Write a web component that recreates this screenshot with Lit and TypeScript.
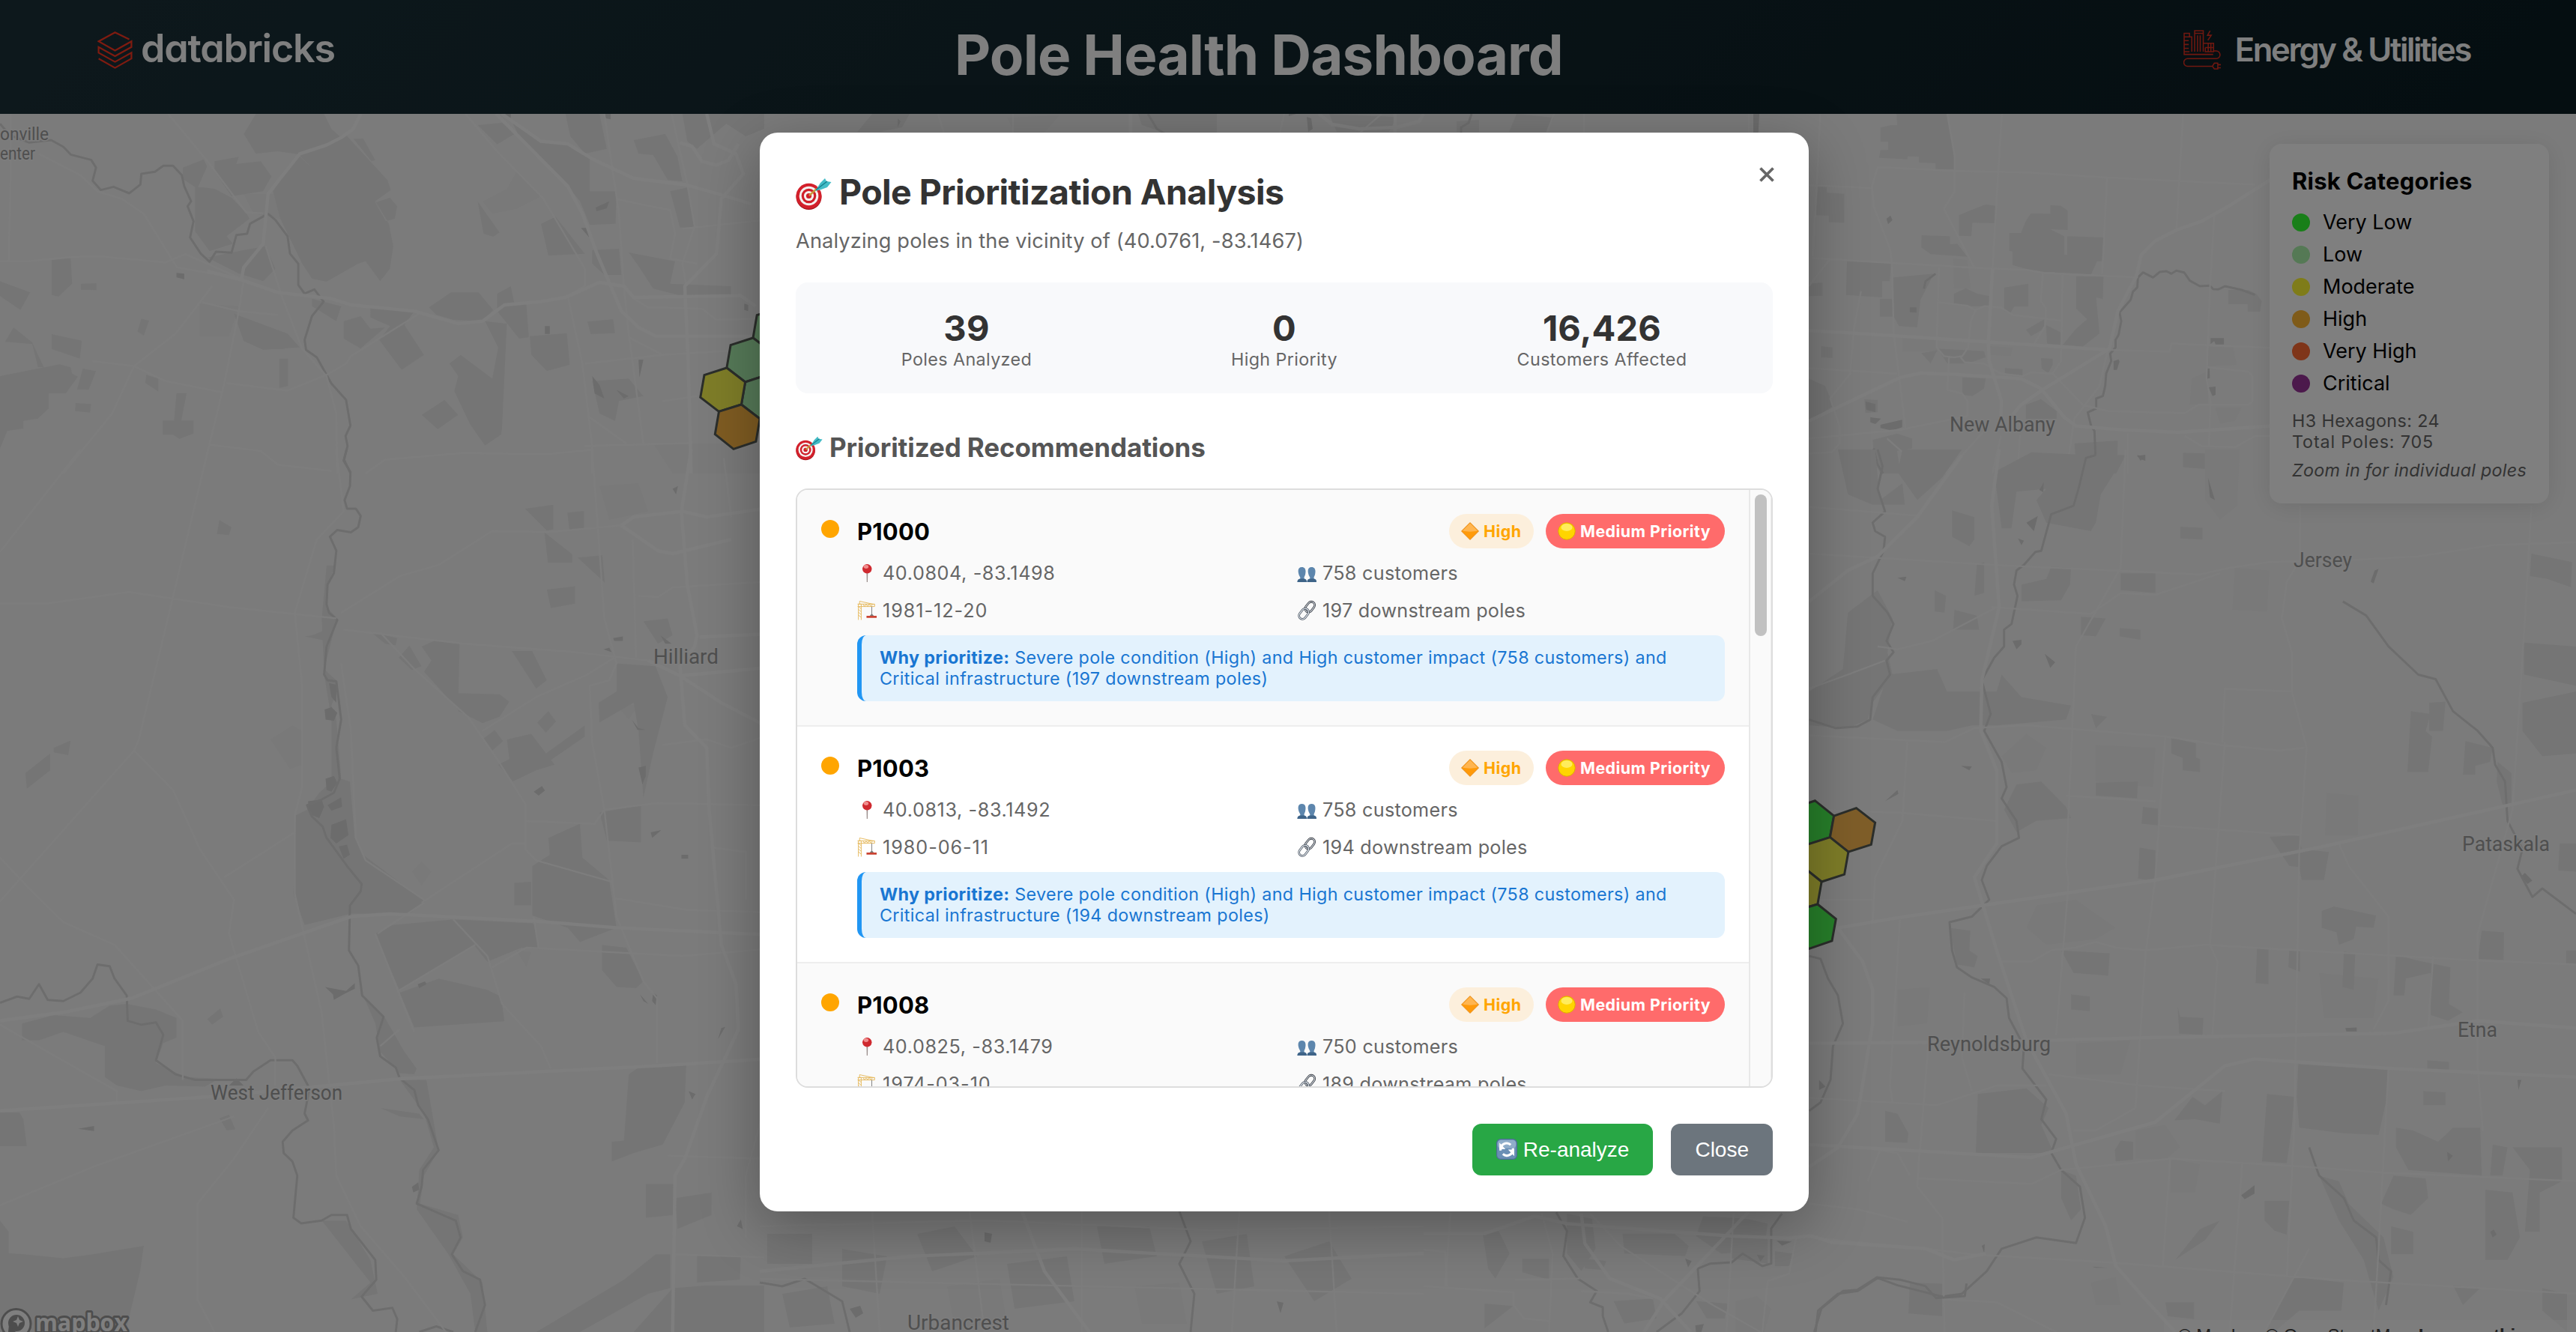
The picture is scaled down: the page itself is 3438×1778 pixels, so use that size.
import { LitElement, html, svg, css, nothing } from "lit";
import { customElement, property } from "lit/decorators.js";

interface Pole {
  id: string;
  coords: string;
  date: string;
  customers: number;
  downstream: number;
}

const POLES: Pole[] = [
  { id: "P1000", coords: "40.0804, -83.1498", date: "1981-12-20", customers: 758, downstream: 197 },
  { id: "P1003", coords: "40.0813, -83.1492", date: "1980-06-11", customers: 758, downstream: 194 },
  { id: "P1008", coords: "40.0825, -83.1479", date: "1974-03-10", customers: 750, downstream: 189 },
];

const STATS = [
  { value: "39", label: "Poles Analyzed" },
  { value: "0", label: "High Priority" },
  { value: "16,426", label: "Customers Affected" },
];

const RISKS = [
  { name: "Very Low", color: "#33ff33" },
  { name: "Low", color: "#abf2ab" },
  { name: "Moderate", color: "#fff933" },
  { name: "High", color: "#ffb733" },
  { name: "Very High", color: "#ff6a33" },
  { name: "Critical", color: "#993399" },
];

/* ---------- icons ---------- */

const ICONS = {
  target: svg`
    <circle cx="17.500" cy="30" r="17" fill="#a3141c"/><circle cx="17.500" cy="28.800" r="17" fill="#d3202b"/>
    <circle cx="17.500" cy="28.500" r="12.800" fill="#f4f1f0"/><circle cx="17.500" cy="28.500" r="9.800" fill="#cf1f2a"/>
    <circle cx="17.500" cy="28.500" r="6.600" fill="#f6f1f0"/><circle cx="17.500" cy="28.500" r="3.600" fill="#cf1f2a"/>
    <path d="M18 28L28 19" stroke="#c79a3b" stroke-width="2.400"/>
    <path d="M26 22L33 11 39 5 41 9 47.500 10 42 17 34 20z" fill="#43bcc6"/><path d="M27 20.500L42 9" stroke="#167e8d" stroke-width="1.500"/>`,
  pin: svg`
    <path d="M23 20h3.4l-.6 26h-2.2z" fill="#9b8f8d"/><circle cx="24.5" cy="13.5" r="11.5" fill="#cf2a30"/>
    <ellipse cx="22" cy="8.5" rx="6" ry="4.6" fill="#f08d8d"/>`,
  crane: svg`
    <path d="M3 47V8h7v39M3 14l7 6M3 21l7 6M3 28l7 6M3 35l7 6M1 8h42v6H1M14 8l4 6 4-6 4 6 4-6 4 6 4-6M6 1L43 9M6 1v7" fill="none" stroke="#e6bb62" stroke-width="1.800"/>
    <path d="M36 14v22" stroke="#8b8b8b" stroke-width="2"/><path d="M31 37l5-5 5 5z" fill="#777"/><path d="M23 37h25v5H23z" fill="#c9402f"/>`,
  people: svg`
    <path d="M1 46c0-5 3-7 7-8 1-3-1-5-3-9C1 17 3 9 12 9s11 8 8 20c-2 4-3 6-2 9 4 1 6 3 6 8z" fill="#5d86ad"/>
    <path d="M25 46c0-5 3-7 7-8 1-3-1-5-3-9-4-12-2-20 7-20s11 8 8 20c-2 4-3 6-2 9 4 1 6 3 6 8z" fill="#5d86ad"/>
    <path d="M1 46c0-5 3-7 7-8h9c4 1 7 3 7 8zM25 46c0-5 3-7 7-8h9c4 1 7 3 7 8z" fill="#3f6488"/>`,
  link: svg`
    <rect x="23" y="1" width="17" height="28" rx="8.500" transform="rotate(38 31.5 15.5)" fill="none" stroke="#3f4349" stroke-width="5.2"/>
    <rect x="23" y="1" width="17" height="28" rx="8.500" transform="rotate(38 31.5 15.5)" fill="none" stroke="#cfd6de" stroke-width="2"/>
    <rect x="8" y="18" width="17" height="28" rx="8.500" transform="rotate(38 16.5 32.5)" fill="none" stroke="#525b67" stroke-width="5.2"/>
    <rect x="8" y="18" width="17" height="28" rx="8.500" transform="rotate(38 16.5 32.5)" fill="none" stroke="#e3e9ef" stroke-width="2.2"/>`,
  diamond: svg`
    <path d="M24 1L47 24 24 47 1 24z" fill="#ff9a0a"/><path d="M24 3L44 23c-12 3-28 3-40 0z" fill="#ffb550"/>
    <path d="M24 1L47 24 24 47 1 24z" fill="none" stroke="#dd7f0c" stroke-width="1.6"/>`,
  circle: svg`
    <circle cx="24" cy="24" r="22.5" fill="#ffd500" stroke="#e0ab00" stroke-width="2"/>
    <ellipse cx="24" cy="14" rx="15" ry="10" fill="#ffec5c"/>`,
  refresh: svg`
    <rect x="1" y="1" width="46" height="46" rx="9" fill="#6a8fb5" stroke="#4c6d92" stroke-width="2"/>
    <rect x="3" y="3" width="42" height="19" rx="8" fill="#8fadc9"/>
    <path d="M10 27a14 14 0 0 1 23-13M38 22a14 14 0 0 1-23 13" fill="none" stroke="#fff" stroke-width="5.4"/>
    <path d="M7 9v15h14zM41 40V25H27z" fill="#fff"/>`,
};

type IconName = keyof typeof ICONS;

@customElement("emoji-icon")
class EmojiIcon extends LitElement {
  @property() name: IconName = "target";
  static styles = css`
    :host { display: inline-flex; flex: none; width: 26px; height: 26px; }
    .glyph { width: 100%; height: 100%; display: block; overflow: visible; }
  `;
  render() {
    return html`<svg class="glyph" viewBox="0 0 48 48">${ICONS[this.name]}</svg>`;
  }
}

/* ---------- map ---------- */

interface Sheet {
  transform: string;
  parks: string;
  pale: string;
  water: string;
  rivers: string;
  thin: string;
  wide: string;
}

const SHEETS: Sheet[] = [
  {
    transform: "translate(0 152) scale(.6505 .33333)",
    parks:
      "M525 0L500 80 525 160 570 150 612 162 640 215 665 130 700 95 680 60 665 0zM612 165L560 310 575 420 600 520 620 600 640 660 670 672 735 600 750 590 780 670 800 620 807 530 798 440 770 350 802 305 795 265 710 85 665 130 640 215zM375 215L418 182 425 210 405 300 375 260zM440 190L490 172 485 200 535 190 557 250 540 310 475 330 440 230zM400 290L440 300 475 335 505 395 512 420 465 490 478 520 430 550 400 470zM725 100L745 98 770 185 762 190zM980 45L1030 35 1058 78 1020 122zM1050 30L1110 110 1160 120 1210 175 1210 310 1265 310 1263 440 1210 445 1190 350 1165 290 1070 110zM1160 0H1230L1245 140 1200 160 1170 90zM1110 440L1140 412 1200 560 1125 568zM1215 545L1270 540 1275 645 1240 645 1215 600zM1300 105L1365 80 1390 170 1400 270 1370 265 1340 165 1310 160zM1375 310L1410 295 1425 455 1395 455zM1400 0H1568V60L1530 90 1490 40 1430 140 1410 110zM980 350L1025 475 1012 492 992 480zM770 355L800 335 815 370 810 420 792 430zM0 670L62 715 42 785 0 730zM106 585L145 575 148 680 120 732 106 725zM166 680L198 678V706L166 704zM28 855L66 915 90 1015 78 1015 66 922 10 913zM106 882L168 908 164 980 106 942zM0 1050L122 1003 145 1015 148 1040 160 1052 135 1120H100L100 1180 78 1220 48 1230V1260L15 1270 0 1340zM170 1020L197 1030 182 1105 158 1103zM155 1158L187 1162 185 1196 154 1190zM362 1118H383L372 1228H397V1280L368 1302 355 1285H334V1228H357zM300 1045L325 1060V1112L298 1078zM290 820L306 828 295 888 282 872zM573 980H591V1090L573 1098zM705 830L740 810 760 860 790 855 740 940 705 900zM760 778L850 790 830 845 870 965 824 1025 778 905 800 850 760 815zM880 775L925 715H982L1012 785 990 830 930 825 895 805zM1020 720L1048 690 1055 755 1080 762 1085 895 1065 900 1020 790zM995 830L1040 840 1030 1260 1028 1285 995 1328 965 1245 932 1110 940 1050 922 1000 945 965 1010 1060 1022 935zM1087 890L1163 878 1169 1005 1122 1030 1090 965zM1205 832L1258 822 1262 878 1212 882zM865 1205L912 1145 940 1205 898 1263zM1215 1070L1290 1060 1320 1130 1270 1150 1262 1230 1230 1200zM480 800L590 880 615 935 540 945 500 910zM535 885L585 890V942L535 940zM425 575L500 545 545 530 565 620 540 670 490 640zM640 740L700 770 690 830 640 770zM1290 555L1385 590 1375 680 1500 690V730H1400L1340 700 1310 610z",
    pale: "M410 760L490 770 470 890 410 890zM1060 230L1110 330 1060 380 1010 400 990 350 1040 300zM500 320L575 320V420L520 400zM1340 1320H1568V1440H1380z",
    water: "M362 637L378 640V662L362 655zM1222 375L1250 350 1245 378 1224 390zM1192 457H1203L1209 495zM1118 850H1128V881H1118zM1527 760L1535 765V790L1527 785zM1310 985H1320L1312 1055zM1215 1050L1230 1085 1240 1140 1220 1120zM1264 1104L1290 1130 1280 1140zM1036 0H1048V20L1038 10zM1240 0H1253V22L1243 18z",
    rivers:
      "M0 40L20 85 60 115 105 105 130 132 145 163 187 184 197 215 190 268 207 305 233 292 265 318 288 283 290 240 318 232 335 208 355 208 373 245 378 290 392 350 385 370 397 430 390 495 412 560 430 592 443 552 475 556 485 485 507 480 513 440 550 400 565 425 590 490 595 560 612 600 612 685 625 720 645 703 664 752 640 810 625 905 628 945 650 975 680 1080 710 1145 719 1248 709 1290 713 1330 706 1385 719 1440",
    thin:
      "M345 0L430 200 505 395 540 398M22 0V230L18 590M0 590H60L140 575 200 570 340 595 380 562 425 600 500 665M80 160L165 245 200 310 250 340 295 400 363 615 435 640M435 690L410 755 360 880 275 1010 230 1200 130 1440M190 990L275 1010 340 1070 455 1115M500 665L490 790 460 1080 415 1440M545 530L580 740 620 940 670 1050 690 1200 692 1440M465 1078L590 1108 670 1045 710 1000 720 970 860 800M955 0L1020 150 1115 340 1200 620V690L1165 730 1195 1000 1215 1330V1440M415 755L490 790 570 805M430 1325L535 1350 570 1405 680 1430M750 1440L790 1385 950 1358 1120 1363 1215 1345M1240 0L1270 400 1280 690 1290 880 1320 1320M1378 0L1410 280 1425 450 1400 600 1408 690M1265 340L1310 360 1375 385 1385 480 1375 580 1430 600M1200 1000L1360 965 1568 940M1210 1215L1285 1320M1360 1150L1430 1130M1290 895L1360 965M1400 460L1568 425M1300 740L1330 775 1440 780 1470 825 1550 820M1200 1330L1420 1318",
    wide:
      "M740 0L725 60 700 95 670 125 615 160 550 320 540 520 500 615 495 665M1018 0L1165 290 1195 400 1225 560 1275 790 1310 855 1345 890H1568M425 630L495 665 570 715 680 740 720 765 850 790 940 840 990 830 1035 765 1110 752 1160 735 1230 675 1280 690 1300 735 1520 728 1550 770M1030 0L1110 110 1165 120 1215 180 1300 258 1410 285 1490 330 1540 360M1450 0L1465 120 1510 160 1525 240 1480 340 1470 560 1405 690 1412 1000 1418 1440M1395 115L1420 130 1440 190 1470 205 1495 185 1515 120",
  },
  {
    transform: "translate(0 600) scale(.6505 .7513)",
    parks:
      "M670 206H688L672 240 670 280 692 300 665 390 692 412V430L680 455 690 480 698 560 700 585 718 590 728 690 745 720 872 803 840 825H720L625 845 602 790 607 650 630 640 655 610 680 590 680 480 665 400 660 300zM640 330L670 320V340L625 332zM762 325L815 335 812 348 790 345zM818 370L840 348 865 385 845 392zM865 350L895 338 943 345 940 462 870 395 885 375zM940 433L1025 435 1045 448 1025 475 990 486 940 465zM1050 358H1092L1122 410 1100 425zM1077 105L1135 98V142L1122 144zM1164 112L1198 109V142L1168 143zM1117 147L1174 186V201H1124zM1185 192L1236 188 1241 237zM1122 249L1180 243V274L1130 282zM990 515L1015 498 1032 518 1010 535zM1102 485L1125 465 1141 483 1120 503zM1040 515L1065 510 1090 505 1138 560 1100 570 1052 590 1022 560 1045 550zM1120 540L1200 490V510L1130 552zM1125 690L1190 665 1195 725 1250 765 1265 850 1190 875 1165 850 1092 828V740L1128 720zM1055 770L1090 768V810H1055zM1230 645L1315 632V698L1245 695zM1265 380L1345 385 1370 440 1340 540 1320 620 1310 500 1300 450 1230 485 1228 450 1265 430zM805 845L930 835 975 880 820 962 770 860zM930 835L1095 842 1105 888 1070 885 1000 910zM1235 880L1285 885 1320 945 1305 957 1265 955 1235 925zM900 940L1000 960 1028 972 1035 1016 850 1027 820 965zM45 1020L110 1005 185 1010 225 988 260 985 320 995 362 1010V1045L335 1055 320 1090 380 1115 450 1118 420 1132 340 1130 290 1140 240 1130 215 1115 215 1060 130 1035 80 1050 45 1050zM735 920L745 970 790 1010 830 1070 855 1100 850 1110 820 1108 780 1070 770 1020 740 960zM820 1120H875L885 1170 900 1245 870 1290 862 1340 940 1360 950 1400 930 1430 990 1480 1000 1568H975L965 1500 920 1430 855 1350 860 1280 890 1240 870 1180zM0 1178H40L48 1190 55 1238H0zM450 1188L470 1182 483 1208 465 1210zM425 1012L452 993 458 1008 435 1022zM52 575L103 540V570L55 603zM110 530L145 517 140 543 110 538zM0 1370L18 1390V1428L50 1430 130 1437 190 1430 295 1415 288 1458 258 1568H0zM1290 1110L1315 1095 1408 1093 1405 1160 1360 1235 1300 1250 1255 1265V1230L1280 1228zM1325 1305H1385V1360L1325 1365zM1385 1330L1460 1320V1360L1390 1385zM1345 1430H1375V1490L1330 1500 1190 1568H1100L1280 1475zM1430 1432H1520L1518 1475 1430 1480zM1450 1485H1568V1568H1300L1380 1490zM660 1370H710L760 1440 775 1500 720 1510 760 1480zM1320 305L1370 300 1380 330 1350 345zM450 125L475 138 470 152 445 150zM780 1170L860 1180 870 1190 820 1185z",
    pale: "M555 515L600 490 620 500V560L595 568zM845 750L865 732 885 750 865 775zM1230 65L1310 60 1330 110 1250 125zM1260 450L1310 455 1290 480zM1060 890L1090 893 1080 920z",
    water:
      "M675 415L690 418 690 450 680 440zM666 462L680 458 692 468 685 482 668 480zM668 585L685 580 692 592 680 608 670 605zM632 625L660 622 665 635 655 655 635 648zM672 632L700 618 702 635 680 642zM680 667L710 657 715 685 690 700 678 690zM695 705L712 702 718 720 705 727zM667 955L710 962 728 948V958L705 968 685 978 683 968zM1238 355L1250 352 1255 360zM1258 335L1278 332V340H1260zM1095 608L1112 598 1118 606 1105 615zM1310 565L1325 562V580L1318 595zM857 950L872 945 875 950 860 957zM470 1130L485 1117 500 1130zM160 1207L193 1202V1211zM1313 968L1330 985 1320 980zM1340 965L1348 970 1345 987 1338 980zM1480 1028L1488 1026 1473 1048zM1413 1140L1427 1145 1420 1155zM845 1310L858 1302 860 1315 848 1320zM1398 720H1412V727H1398zM1380 70L1391 65 1387 80zM1296 480L1310 495 1325 498H1308zM1355 330L1378 345 1365 345zM1335 680L1357 676 1338 690zM1512 1380L1520 1368 1524 1385z",
    rivers:
      "M711 0L705 20 719 40 718 65 707 90 712 105 730 105 740 118 735 138 720 147 692 143 677 155 690 180 685 220 672 240 670 275 675 290 692 303 670 350 665 400 672 410 690 412 700 480 690 530 697 585 685 610 660 622 630 632 640 652 662 670 670 690 712 740 742 772 740 785 718 810 716 890 735 917 743 970 787 1008 773 1045 780 1078 812 1098 820 1117 850 1138 858 1165 878 1190 900 1245 868 1280 865 1310 855 1340 935 1370 945 1400 927 1430 950 1460 985 1475 995 1520 975 1568M0 983L35 972 60 976 80 950 98 978 130 980 165 965 190 940 200 915 225 918 235 940 260 970 262 1015 290 1022 320 1018 335 1040 320 1085 360 1110 400 1120 505 1120 520 1105 555 1085H600L610 1095 635 1135 625 1180 632 1192 600 1210 580 1230 582 1250 600 1265 610 1290 602 1365 618 1375 660 1370 680 1360H712L720 1385 770 1440 772 1475 742 1505 765 1530 805 1525 815 1545 812 1568M860 1568L895 1558 930 1568",
    thin:
      "M165 0L0 182M427 0L285 515 275 535 0 803M0 273H100L265 253 470 280 690 300M690 0L705 110 650 160 605 290 620 420V600L605 650V790L660 1000 685 1200 690 1290 740 1380 830 1470 915 1568M275 535L355 605 410 710 480 800 470 860 485 905 530 1035 565 1080V1130M460 760L605 680M0 725L60 780 130 840 235 880 375 1015V1120M700 290L820 225 900 205 1010 145 1120 147 1275 135M705 320L950 345 1180 360 1330 375M700 380L720 500 730 690 750 730 870 800M780 325L850 390 960 475 1020 550 1078 630V710L1100 730 1255 768M865 805L1050 700H1080M775 860L870 805M770 860L850 1035M930 835L1000 900 1030 985 1110 1060 1130 1100M1010 920L1080 885 1400 900 1568 888M1095 830L1105 887M815 963L975 880M0 1343L190 1275 480 1185M1215 0L1240 300 1265 380 1250 410 1210 420 1215 520 1240 640 1265 830 1320 945 1348 975V1090M1298 160L1305 370M990 500L1100 440 1205 400 1260 370M1080 660L1220 665 1240 640 1350 628 1568 632M1260 797L1410 818 1568 822M550 1170L480 1260 405 1340V1510L440 1568M1360 525L1450 515 1500 530 1568 510M1310 260L1350 262 1380 245 1568 235M1485 15L1500 120M780 1060L820 1030M1370 1255L1568 1260M1380 1430L1568 1435M0 1022L240 1140V1160M1568 1170L1530 1290V1400M1460 707L1530 715V800",
    wide:
      "M0 1015L130 1000 270 975 470 905 720 830 800 825 1100 838 1270 850 1568 862M0 1175L430 1150 820 1118 1350 1095 1568 1083M1275 135L1300 120 1400 110 1450 120 1568 105M1418 0L1398 110 1410 240 1430 330 1425 350 1395 385 1405 490 1450 530 1455 640 1480 880 1510 950 1515 1030 1450 1150 1405 1260 1385 1290 1380 1568M1330 375L1395 402 1480 450 1568 490M1395 402L1568 388M1275 135L1350 180 1380 185 1500 160M1435 333L1568 328",
  },
  {
    transform: "translate(2340 152) scale(.44643 .33333)",
    parks:
      "M428 0H580L602 160V222H545V198L495 195V172L462 170 460 182 376 176 380 145H403V112H380V55L412 45H430zM188 290L220 293V315L272 320V436L226 434V408L188 406zM615 405L655 383 695 362 724 368 721 438 655 436 652 490 615 488zM503 486L588 490V522L610 520 640 572 530 562 502 535zM830 398L888 400V365L920 368 940 388V465L888 462 930 490V632L870 634 825 625 775 605V552L765 548V477H800L815 428zM938 490L1047 495 1043 590H1028L1010 643 900 635V560L938 565zM280 590L412 598 408 670H385V735L277 725zM417 655L540 640 500 745 490 855 435 850 420 812 378 812V740H417zM750 695L822 680V772L780 772 770 795 750 790zM600 720L635 698 670 720 706 730V770H655L600 765zM965 650L1047 652 1045 742 1025 735 1035 880 985 932 925 925 965 860 998 822 965 780zM875 845L920 875V925L878 920zM815 865L870 822 870 860 830 890zM1420 705L1480 705 1505 722 1520 750 1515 792H1478V762H1420zM502 958L550 947 530 1000zM550 940L690 950 695 975 640 1000H580zM860 978L895 980V1005L882 1038 862 1020zM752 1018L805 1022V1048L752 1042zM625 1055L695 1060 690 1100 655 1130 625 1125zM815 1165L860 1142 907 1190V1222H815zM332 1143L372 1145V1195L335 1198zM357 1305L430 1280 475 1300V1340L430 1350 440 1440H380L360 1390zM960 1320L1090 1308 1088 1380H1108L1085 1440H985L1000 1385 963 1375zM1285 1357L1352 1360 1350 1422 1285 1415zM825 1370L903 1395 895 1440H820zM166 1060L215 1090 240 1170 166 1230zM203 930L237 935V978L203 975zM166 680L207 675V728L166 730z",
    pale: "M597 580L640 585 650 700 600 700zM1360 932L1435 935 1445 1005 1360 1010zM1310 1060L1360 1030V1165H1305zM1380 1175L1460 1175 1440 1230 1395 1240zM445 890L550 895V950L445 950zM700 930L775 935 770 970 700 965z",
    water:
      "M398 420L410 407 416 425 403 442zM468 775H488V796L468 794zM1367 898H1407V923H1382L1378 910 1367 922zM1356 1020L1364 1018 1365 1058 1356 1060zM1361 1095L1382 1092V1125L1373 1130zM1077 990L1092 983 1095 992 1087 1025H1077zM335 1152L365 1162V1195L338 1185zM350 1215L382 1220 365 1242 350 1235zM380 1245L445 1225V1255L415 1268 380 1258zM1147 1370L1172 1365V1390L1158 1382zM0 0H18L15 75H0z",
    rivers:
      "M1500 725L1460 705 1410 690 1390 703 1375 702 1365 688 1335 690 1305 668 1288 635 1265 628 1250 640 1235 630 1215 633 1195 655 1165 635 1150 655 1148 695 1135 712 1128 745 1095 795 1100 830 1092 885 1083 905V935L1067 960 1070 990 1055 1040 1052 1090 1045 1130 1025 1140V1180L1000 1195 1010 1250 1020 1270 1023 1370 1000 1380 985 1440M545 640L515 670 510 700M360 1340L370 1400 388 1440",
    thin:
      "M200 0L190 290 178 570M580 0L602 170V310L570 380 660 615M743 0L732 235 715 620M372 213L600 228 830 235 1060 255 1500 283M372 213L355 290 360 370 410 545 415 620 420 880 435 1040 455 1260M1285 0L1265 465M1058 255L1043 640M166 285L355 297M178 578L410 597 710 620 820 625 870 637 1150 655M555 615L548 935 570 970 600 975 625 970 642 935 650 830 665 785 690 770 740 775 775 805 920 828M555 755L640 768 665 788M1378 405L1365 700 1355 1060 1367 1150 1362 1330M1060 945L1245 952 1250 920 1568 938M166 1018L430 1040M620 975L632 995 690 1000 740 1040 805 1050 830 1035 895 1040 985 1165 1060 1190 1290 1198 1330 1165 1480 1165 1492 1150V1050L1480 1032 1360 1015M585 975L580 1105 625 1120 640 1150V1210M925 640L920 990 895 1040M865 640L860 750 875 780 872 850 840 920M1060 945L1035 1090 960 1220 935 1440M230 580L166 690M322 710L300 870 290 1040 230 1140 258 1250V1320L235 1355 166 1360M166 1300L440 1265 640 1210M740 1290L715 1440M1120 1280V1440M575 1440L690 1270M400 1300L480 1395 550 1400M1290 1290L1340 1330 1440 1335 1500 1290H1568M797 1285L790 1440",
    wide:
      "M715 620L703 910 705 990 742 1150 740 1210M166 868L300 878 550 900 1060 945M1568 245L1420 370 1340 430 1265 465 1200 510 1160 565 1145 650 1090 790 1065 940 870 1100 800 1165 775 1205M166 1230L440 1055 500 1038 600 1043 800 1060 860 1100 930 1215 965 1250 1100 1265 1270 1275 1568 1248",
  },
  {
    transform: "translate(2400 600) scale(.66199 .75128)",
    parks:
      "M80 0H155L165 90 210 60 215 98H150L100 80zM210 0H330L290 50 240 90 200 40zM395 40L470 5 590 10H660L610 80 600 130 590 145 500 130 480 90 500 70 440 75 430 140H410zM310 108L355 120V160L345 172 310 155zM770 137L815 139V160L770 158zM100 290L160 250 190 300 180 360 190 400 150 450 140 480 100 495 22 490V430L90 390zM180 400L280 390 300 430 400 430 410 400 450 440 550 455 540 480 400 490 350 490 300 500 200 500 150 480zM450 240L500 230 510 208 550 210 548 240 530 268 450 270zM360 205L375 200V255L355 260zM275 250L298 260 295 290 275 288zM315 285L360 295 365 320 312 320zM570 297L620 300 600 332 570 330zM648 317L690 320V338L648 332zM650 220H720V255L650 250zM590 470L623 475 600 495zM752 512L802 522V547L810 550V573L775 570V548L752 540zM440 595L490 590 540 635 550 655 480 660 440 680 415 640zM600 592L685 590 683 620 600 615zM695 635L725 638V668L692 665zM688 707L720 712V768L685 762zM950 688L1010 685 1015 710 1070 715 1060 765H1015L1010 742 990 740zM1055 820L1080 812 1165 828 1160 850 1125 848 1120 870 1090 880 1085 858 1055 850zM1235 465L1275 470 1265 500 1278 510 1270 573H1228zM1272 450L1305 448 1300 500 1272 500zM1345 518L1400 530 1395 555 1365 562V578H1340zM1410 555L1438 575V630L1420 632 1408 590zM1478 185L1560 200 1558 245 1510 230 1475 225zM1463 343L1568 350V420L1463 400zM1460 450L1568 430V540L1500 545 1460 500zM1535 700H1568V750L1532 748zM925 885H948V950L922 948zM990 888L1012 890V928L988 920zM1100 892L1123 895 1120 960 1097 955zM1378 855L1423 858 1422 907 1370 905zM1205 898L1250 908 1315 920 1312 985 1340 1000 1310 1015 1275 1005V930L1225 940 1222 970H1200zM1548 890H1568V915H1548zM530 890L628 895 625 935 555 930zM550 968L588 972V998L550 995zM765 990L770 1008 817 1010 815 1040 768 1038zM305 850L347 855 345 890 362 900 355 920 320 915zM1008 1092L1188 1102V1148L1170 1218 1100 1215 1010 1205 1005 1150zM945 1145L1000 1150 995 1205 985 1268 935 1265zM758 1192L795 1150 820 1165 855 1140 850 1198 800 1190zM362 1145L460 1135 505 1170 490 1200 515 1250H358zM175 1175L200 1180 222 1215 220 1232 175 1230zM638 1245L650 1228 675 1230V1262L640 1265zM1205 1205L1240 1210 1290 1230 1320 1205 1375 1205 1378 1290 1230 1280 1205 1240zM1200 1290L1265 1295 1270 1330 1235 1360 1200 1350 1175 1340zM1400 1235L1430 1240 1420 1290 1395 1290zM1440 1240L1540 1240V1300L1495 1320V1390H1465L1475 1280zM1385 1315L1440 1320 1455 1400 1430 1440H1385zM1195 1380L1240 1390V1430H1195zM1260 1140L1305 1142V1165H1260zM1268 1085L1312 1088V1102H1268zM940 1335L990 1335 985 1395 960 1388 940 1370zM530 1280L560 1290 570 1350 550 1370 530 1330zM225 1480L290 1482V1540L222 1535zM1000 1470L1100 1480 1095 1530 1010 1530 960 1568H940zM740 1515H798V1545L745 1540zM1320 1485L1375 1490 1340 1520zM760 1440L810 1385 850 1370 820 1405zM1500 1490L1550 1500V1568L1500 1530zM1050 1290L1090 1300 1110 1340 1180 1400 1200 1470 1170 1530 1140 1440 1090 1370z",
    pale: "M820 0H890L885 100 850 125 820 90zM880 210L950 215 945 288 875 285zM1065 610L1130 615 1128 685H1062zM480 810L560 800 640 850 600 870 500 880 460 850zM200 960L265 955 260 1020 200 1025zM680 1210L740 1200 770 1240 740 1262 680 1260zM1050 930L1170 940 1160 1010 1060 1010zM460 505L500 530 480 570 430 575 410 545zM600 525L720 530 715 600 600 590zM560 1055L670 1050 650 1110 560 1110zM750 1260L810 1270 800 1320 750 1320zM590 1480L640 1470 650 1520 600 1520z",
    water:
      "M826 50L840 90 830 85zM432 340L450 338V346L440 355zM497 363L518 378 508 388zM200 228L218 226 215 234zM328 562L350 563 345 570zM175 625L200 605 202 612zM1162 215L1170 212 1160 238 1154 235zM1458 758L1465 752 1480 766 1470 772zM368 940H387L385 950zM1103 1028L1126 1027V1034H1105zM1450 1120H1458L1452 1138zM893 1325L920 1307V1322L900 1332zM1395 1390L1402 1386 1408 1395 1400 1400zM592 1452L625 1454H600zM370 1415L376 1412 375 1428zM683 10L700 12 690 20zM332 80L357 88zM460 130L483 118 475 145zM443 158L455 162 450 170zM1308 1248L1320 1255 1310 1265zM486 72L495 58 494 76zM42 1120L55 1132 42 1138z",
    rivers:
      "M160 0L170 30 160 70 175 110 150 130 155 145 175 155 172 180 150 220 150 260 165 275 180 290 192 310 178 340 192 360 178 375 185 400 150 440 145 480 120 492 75 495 22 480M600 10L580 15 565 70 555 100 510 115 490 180 478 182 455 205 440 215 435 240 442 260 430 310 415 320V350L395 370 370 410 388 470 375 500 410 555 420 600 410 620 440 660 445 690 410 705 380 740 370 765 385 800 350 830 305 840 310 890 320 920 350 938 395 955 420 975 425 1010 455 1060 452 1100 500 1155 490 1190 520 1225 510 1250 530 1280 568 1310 578 1365 560 1410 480 1400 410 1420 380 1460 330 1500 290 1505 200 1485 160 1472 120 1495 80 1500 40 1530 35 1568M1098 270L1145 295 1190 350 1250 400 1285 408 1320 465 1370 500 1400 530 1405 560 1425 590 1430 660 1460 710 1450 745 1480 795 1500 780 1568 825M22 900L45 905 60 940 80 970 90 1020 70 1060 65 1120 45 1160 22 1175M1030 1240L1050 1290 1100 1330 1120 1370 1165 1400 1170 1440 1195 1460 1185 1520",
    thin:
      "M660 0L650 210 560 350 540 740 545 770 520 1040M1012 100V195L985 235 975 300 995 360V430L1025 530 1010 720 1000 1200 985 1470M1478 100L1465 300 1440 640 1370 860V1100L1380 1210M22 102L245 118M22 185L390 205 810 222 870 210 950 200 1100 197 1250 190 1400 170 1568 165M390 280L590 292 650 255 720 258 800 235 850 220M995 430L860 425 855 520M160 350L200 355 270 340 400 280M22 425L100 400 175 375M22 508L295 520 355 495 460 490 740 510 850 525 970 535 1020 530M220 520L210 660 155 760 150 840M22 640L200 645 400 660M540 615L720 625M725 668L1010 685M740 510L720 760 700 900 680 1170M860 520L830 880 845 910 835 1040M1090 700L1110 740 1190 830V980L1160 1030M22 800H150M205 835L185 1130 190 1160M410 910H470L510 890 560 885 600 875 640 885 700 890 820 880 1010 890 1370 908 1568 915M505 1110L690 1130 860 1140M1190 1100L1170 1420 1160 1568M680 1170L600 1210 555 1210M22 1152L280 1165 400 1130H500M240 1295L470 1305 530 1280 670 1268 750 1260 1030 1275 1180 1285 1568 1300M245 1240L240 1310 290 1365 295 1568M140 1300L165 1245 200 1250 225 1290M262 1060L245 1250M750 1260L735 1450M895 1268L870 1568M0 1397L100 1407 260 1420 350 1430 640 1445 1080 1475 1568 1500M22 1340L120 1350 220 1372M1030 1420L940 1568M335 965L330 1080 350 1140M1280 900L1270 1030M290 1510L400 1515 520 1568",
    wide:
      "M22 270L100 215 160 190 240 120 330 10M405 0L390 100 405 280 370 410 368 500 400 570V700L355 760 400 890 460 1050 540 1180 560 1270 620 1380 640 1450 700 1510 760 1568M80 850L200 832 720 765 1060 705 1568 605M22 1055L400 1052 700 1045 1200 1037 1370 1015 1568 1028M22 1235L470 1258 720 1195 860 1095 920 1083 1200 1100 1568 1115M80 850L130 910 150 960 150 1020 120 1180 80 1240 22 1275",
  },
  {
    transform: "translate(1900 1280) scale(.4783 .33333)",
    parks:
      "M165 1100L210 1090 240 1180 200 1280 180 1240zM275 1200H350V1285L275 1255zM400 1020L470 1040 480 1160 440 1250 400 1180zM445 1200L510 1210 500 1245 450 1240zM555 1100L700 1100 740 1150 730 1190 560 1180zM780 1030L900 1040 960 1060 950 1170 830 1180 760 1110zM860 1100L960 1110V1220L860 1200zM980 1170L1030 1180 1020 1230 980 1230zM170 1380L250 1390 170 1480zM530 1370L640 1360 650 1440 560 1460zM760 1370L850 1380 840 1440 790 1440z",
    pale: "M870 1370L930 1350 970 1400 950 1494H870z",
    water: "M985 1128L1028 1132 1000 1148zM930 1185L952 1188 940 1212zM758 1468L782 1462 775 1494H760zM730 1200L748 1210 738 1235z",
    rivers:
      "M370 1015L400 1090 390 1190 430 1280 483 1330 465 1375 500 1395V1430L515 1494M1000 1020L970 1080V1220L945 1230 890 1180 860 1215 800 1220 765 1240 770 1330 720 1420 650 1494M1090 1494L1110 1400 1170 1330 1210 1325 1265 1275 1330 1285 1400 1310 1430 1358 1510 1350 1515 1300",
    thin:
      "M330 1020L360 1180 350 1494M465 1020L550 1150 800 1380 940 1494M255 1285L435 1280M0 1165L60 1172 65 1310M0 1310L250 1335V1385L280 1440 350 1450M440 1330L570 1340 640 1360M865 1020L845 1494M1040 1110L1020 1260 960 1290 945 1494M75 1015L60 1310",
    wide:
      "M0 1100H170L310 1030 400 1060 860 1110 1020 1118 1080 1108 1140 1135 1400 1160 1480 1205 1568 1180M440 1020L450 1140 520 1280 660 1360 745 1494M905 1015L670 1370 615 1494",
  },
  {
    transform: "translate(1014 1617)",
    parks:
      "M10 30H70V70H10zM110 50L170 60 160 110 110 100zM210 30L260 20 290 60 230 80zM330 70L410 60 420 120 340 130zM450 20H520L530 60 460 70zM590 40L650 30 660 100 610 110zM700 60L760 40 790 90 740 120zM30 110L90 100 100 150 40 155z",
    pale: "M250 100L320 90 330 150 260 155zM500 100L560 95 570 150H510z",
    water: "M120 130l14-4 4 10-10 6zM300 28l10 2-2 12-8-2zM690 120l9 2-4 14z",
    rivers: "M560 0L575 40 560 70 580 110 575 161M0 95L30 100 60 90 110 120 120 161",
    thin: "M0 20L300 12 600 25 886 20M150 0L160 161M280 0L300 161M430 0V161M640 0L630 161M0 90L886 110M760 0L770 161",
    wide: "M0 80L200 60 420 50 700 66 886 56M350 0L380 80 440 161",
  },
  {
    transform: "translate(1014 152)",
    parks: "M150 0H200L190 18 160 24H130zM505 0H610V25H540L510 15zM760 0L850 4 840 24H770zM930 10L960 8V24H930zM1010 0L1060 5 1050 24H1000z",
    pale: "M595 17H605V25H595zM330 5L400 2 380 25H340z",
    water: "M730 4l6 2 2 14-6 4zM706 0h10l-10 3zM184 6l4 4-4 8z",
    rivers: "M518 0L530 20 540 26M950 0L946 12 936 18V26",
    thin: "M238 0L246 26M338 0V26M700 0L694 26M800 26L830 0M1060 0L1050 26M1320 0V26M1100 0V26",
    wide: "M746 0L764 14 800 20 850 18 880 10 886 0M495 0V26M848 0V26",
  },
];

interface MapLabel {
  text: string;
  x: number;
  y: number;
  w: number;
  small?: boolean;
}

const LABELS: MapLabel[] = [
  { text: "onville", x: 0, y: 187, w: 65, small: true },
  { text: "enter", x: 0, y: 213, w: 47, small: true },
  { text: "Hilliard", x: 872, y: 886, w: 87 },
  { text: "West Jefferson", x: 281, y: 1468, w: 176 },
  { text: "New Albany", x: 2602, y: 576, w: 141 },
  { text: "Jersey", x: 3061, y: 757, w: 78 },
  { text: "Pataskala", x: 3286, y: 1136, w: 117 },
  { text: "Etna", x: 3280, y: 1384, w: 53 },
  { text: "Reynoldsburg", x: 2572, y: 1403, w: 165 },
  { text: "Urbancrest", x: 1211, y: 1775, w: 136 },
];

const HEXES = [
  { g: 0, fill: "#acf4b0", d: "M1545 897L1553 806 1600 776 1637 833 1629 925 1583 954z" },
  { g: 0, fill: "#acf4b0", d: "M1545 897L1583 954 1575 1045 1529 1074 1491 1017 1499 926z" },
  { g: 0, fill: "#acf4b0", d: "M1529 1074L1575 1045 1613 1102 1605 1192 1559 1221 1521 1164z" },
  { g: 0, fill: "#fdfa50", d: "M1491 1017L1529 1074 1521 1164 1475 1192 1437 1135 1445 1046z" },
  { g: 0, fill: "#ffb944", d: "M1521 1164L1559 1221 1551 1312 1505 1342 1467 1283 1475 1192z" },
  { g: 3, fill: "#4fff54", d: "M34 624L72 651 64 689 18 702-18 676-10 637z" },
  { g: 3, fill: "#ffbc52", d: "M117 637L155 663 147 702 101 715 64 689 72 651z" },
  { g: 3, fill: "#fdfa50", d: "M64 689L101 715 93 755 47 768 10 742 18 702z" },
  { g: 3, fill: "#fdfa50", d: "M10 742L47 768 39 808-7 820-44 794-36 755z" },
  { g: 3, fill: "#4fff54", d: "M39 808L76 834 68 873 22 887-15 861-7 820z" },
];

@customElement("pole-map")
class PoleMap extends LitElement {
  static styles = css`
    :host { display: block; width: 3438px; height: 1626px; }
    .canvas { display: block; width: 100%; height: 100%; background: #f7f7f7; }
    .parks { fill: #ebebeb; }
    .pale { fill: #f2f2f2; }
    .water { fill: #d8d8d8; }
    .river { fill: none; stroke: #dbdbdb; stroke-width: 3; stroke-linejoin: round; }
    .thin { fill: none; stroke: #fbfbfb; stroke-width: 2.2; stroke-linejoin: round; }
    .wide { fill: none; stroke: #fcfcfc; stroke-width: 4.4; stroke-linejoin: round; }
    .river, .thin, .wide, .hex { vector-effect: non-scaling-stroke; }
    .hex { stroke: #565c56; stroke-width: 3; }
    .label {
      font: 400 28px Roboto, "Liberation Sans", sans-serif;
      fill: #9e9e9e; paint-order: stroke; stroke: #fafafa; stroke-width: 3px;
    }
    .small { font-size: 23px; }
    .brand {
      font: 700 33px "Open Sans", "Liberation Sans", sans-serif;
      fill: #fff; paint-order: stroke; stroke: #9a9a9a; stroke-width: 6px; stroke-linejoin: round;
    }
  `;
  render() {
    return html`<svg class="canvas" viewBox="0 152 3438 1626">
      ${SHEETS.map(
        (s) => svg`<g transform=${s.transform}>
          <path class="pale" d=${s.pale}/><path class="parks" d=${s.parks}/><path class="water" d=${s.water}/>
          <path class="river" d=${s.rivers}/><path class="thin" d=${s.thin}/><path class="wide" d=${s.wide}/>
        </g>`
      )}
      ${HEXES.map((h) => svg`<g transform=${SHEETS[h.g].transform}><path class="hex" fill=${h.fill} d=${h.d}/></g>`)}
      ${LABELS.map(
        (l) => svg`<text class=${l.small ? "label small" : "label"} x=${l.x} y=${l.y} textLength=${l.w} lengthAdjust="spacingAndGlyphs">${l.text}</text>`
      )}
      <circle cx="21.5" cy="1767" r="19.5" fill="#fff" stroke="#9a9a9a" stroke-width="3"/>
      <circle cx="22" cy="1766" r="11" fill="#9a9a9a"/>
      <path d="M11 1778l1-10 9 10z" fill="#9a9a9a"/>
      <path d="M24 1757l2 5 5 2-5 2-2 5-2-5-5-2 5-2z" fill="#fff"/>
      <text class="brand" x="47" y="1777" textLength="123" lengthAdjust="spacingAndGlyphs">mapbox</text>
    </svg>`;
  }
}

/* ---------- header ---------- */

@customElement("app-header")
class AppHeader extends LitElement {
  static styles = css`
    :host {
      display: flex; align-items: flex-start; justify-content: space-between;
      box-sizing: border-box; width: 3438px; height: 152px; padding: 0 141px 0 130px;
      background: linear-gradient(135deg, #1b3139 0%, #0a1c22 100%);
      color: #fff; font-family: Inter, "Liberation Sans", sans-serif;
    }
    .brand { display: flex; align-items: center; gap: 11px; height: 134px; }
    .bricks { width: 47px; height: 50px; flex: none; }
    .wordmark {
      font-size: 52px; line-height: 60px; font-weight: 600; letter-spacing: -1.2px;
      font-feature-settings: "cv11"; margin-top: -4px; width: 258px; white-space: nowrap;
    }
    .title { margin: 0; font-size: 74.5px; line-height: 146px; font-weight: 700; letter-spacing: -0.85px; white-space: nowrap; }
    .sector { display: flex; align-items: center; gap: 19px; height: 132px; }
    .grid-icon { width: 50px; height: 53px; flex: none; }
    .sector-name { font-size: 43.5px; font-weight: 600; letter-spacing: -2.35px; white-space: nowrap; }
  `;
  render() {
    return html`
      <div class="brand">
        <svg class="bricks" viewBox="0 0 46 50" fill="none" stroke="#ff3621" stroke-width="2.2">
          <path d="M42 10.500L23 1.300 1.100 13.200 23 25.400 44.900 13.200V20.800L23 33 1.100 20.800V28.400L23 40.600 44.900 28.400V36.200L23 48.600 1.100 36.200"/>
        </svg>
        <div class="wordmark">databricks</div>
      </div>
      <h1 class="title">Pole Health Dashboard</h1>
      <div class="sector">
        <svg class="grid-icon" viewBox="0 0 49 52" fill="none" stroke="#e03020" stroke-width="1.5">
          <path d="M8 28.500H1V4.500H8V9H11V28.500M1 9H8M1 14H7M1 19H7M1 24H7M14.700 28.500V1H26V28.500M14.700 4.500H26M18.500 7V28.500M22 7V28.500M26 17.500H39.500V28.500H28.700V23M28.700 23H39.500M32.500 17.500V28.500M36 17.500V28.500M35 1L31.500 7H36.500L32 13.500M1 28.500V32H39M39.500 27.500H43A5 5 0 0 1 43 37.500H5.500A4.800 4.800 0 0 0 5.500 47.500H38M38 47.500L40.500 43.500H45V51H40.500zM45 45.500H49M45 49.500H49"/>
        </svg>
        <div class="sector-name">Energy &amp; Utilities</div>
      </div>
    `;
  }
}

/* ---------- legend ---------- */

@customElement("risk-legend")
class RiskLegend extends LitElement {
  static styles = css`
    :host {
      display: block; box-sizing: border-box; width: 373px; height: 480px; padding: 30px 30px 0;
      border-radius: 16px; background: #fff; box-shadow: 0 4px 32px rgba(0, 0, 0, 0.1);
      font-family: Inter, "Liberation Sans", sans-serif; color: #000; white-space: nowrap;
    }
    .heading { margin: 0 0 13px; font-size: 31px; line-height: 40px; font-weight: 700; letter-spacing: 0.2px; }
    .row { display: flex; align-items: center; gap: 17px; height: 43px; font-size: 27px; letter-spacing: 0; }
    .dot { width: 24px; height: 24px; border-radius: 50%; flex: none; }
    .info { margin-top: 15px; font-size: 23.300px; line-height: 28px; color: #666; letter-spacing: 0.4px; }
    .total { letter-spacing: 0.85px; }
    .hint { margin-top: 10px; font-style: italic; letter-spacing: 0.28px; }
  `;
  render() {
    return html`
      <h2 class="heading">Risk Categories</h2>
      ${RISKS.map(
        (r) => html`<div class="row"><span class="dot" style="background:${r.color}"></span>${r.name}</div>`
      )}
      <div class="info">
        <div>H3 Hexagons: 24</div>
        <div class="total">Total Poles: 705</div>
        <div class="hint">Zoom in for individual poles</div>
      </div>
    `;
  }
}

/* ---------- list item ---------- */

@customElement("pole-item")
class PoleItem extends LitElement {
  @property({ attribute: false }) pole?: Pole;
  static styles = css`
    :host {
      display: flex; gap: 24px; box-sizing: border-box; height: 316px; flex: none;
      padding: 32px; border-bottom: 2px solid #eee; background: #fafafa;
    }
    :host(:nth-child(even)) { background: #fff; }
    .dot { width: 24px; height: 24px; margin-top: 8px; border-radius: 50%; background: #ffa500; flex: none; }
    .body { flex: 1; min-width: 0; }
    .head { display: flex; align-items: center; height: 46px; gap: 16px; }
    .id { flex: 1; font-size: 31px; font-weight: 700; color: #000; letter-spacing: 0.2px; padding-top: 1px; }
    .badge {
      display: flex; align-items: center; box-sizing: border-box; height: 46px; padding: 0 16px;
      gap: 6px; border-radius: 24px; font-size: 21.4px; font-weight: 700; letter-spacing: 0.45px; white-space: nowrap;
    }
    .badge emoji-icon { width: 24px; height: 24px; }
    .risk { width: 113px; color: #ffa500; background: #fcefdc; }
    .priority { width: 239px; color: #fff; background: #ff6b6b; }
    .facts {
      display: grid; grid-template-columns: 1fr 1fr; grid-auto-rows: 34px; gap: 16px;
      margin: 16px 0; font-size: 25.200px; color: #666; letter-spacing: 0.27px;
    }
    .fact { display: flex; align-items: center; gap: 8px; white-space: nowrap; }
    .coords { letter-spacing: 0.6px; }
    .date { letter-spacing: 0.95px; }
    .why {
      box-sizing: border-box; height: 88px; padding: 16px 24px; border-left: 6px solid #2196f3; border-radius: 12px;
      background: #e3f2fd; color: #1976d2; font-size: 23.300px; line-height: 28px; letter-spacing: 0.35px; white-space: nowrap;
    }
    .lead { font-weight: 700; }
  `;
  render() {
    const p = this.pole;
    if (!p) return nothing;
    return html`
      <span class="dot"></span>
      <div class="body">
        <div class="head">
          <div class="id">${p.id}</div>
          <div class="badge risk"><emoji-icon name="diamond"></emoji-icon>High</div>
          <div class="badge priority"><emoji-icon name="circle"></emoji-icon>Medium Priority</div>
        </div>
        <div class="facts">
          <div class="fact coords"><emoji-icon name="pin"></emoji-icon>${p.coords}</div>
          <div class="fact"><emoji-icon name="people"></emoji-icon>${p.customers} customers</div>
          <div class="fact date"><emoji-icon name="crane"></emoji-icon>${p.date}</div>
          <div class="fact"><emoji-icon name="link"></emoji-icon>${p.downstream} downstream poles</div>
        </div>
        <div class="why">
          <span class="lead">Why prioritize:</span> Severe pole condition (High) and High customer impact
          (${p.customers} customers) and<br />Critical infrastructure (${p.downstream} downstream poles)
        </div>
      </div>
    `;
  }
}

/* ---------- dialog ---------- */

@customElement("analysis-dialog")
class AnalysisDialog extends LitElement {
  static styles = css`
    :host {
      display: block; position: relative; box-sizing: border-box; width: 1400px; height: 1440px; padding: 48px;
      border-radius: 24px; background: #fff; box-shadow: 0 20px 80px rgba(0, 0, 0, 0.3);
      font-family: Inter, "Liberation Sans", sans-serif; color: #333; white-space: nowrap;
    }
    .title { display: flex; align-items: center; gap: 10px; margin: 0; font-size: 46.500px; line-height: 62px; font-weight: 700; letter-spacing: -0.58px; }
    .title emoji-icon { width: 48px; height: 48px; margin-top: 2px; }
    .subtitle { margin: 18px 0 0; font-size: 27.200px; line-height: 33px; color: #666; letter-spacing: 0.13px; }
    .close-x { position: absolute; top: 46px; right: 46px; width: 20px; height: 20px; display: block; }
    .stats {
      display: grid; grid-template-columns: repeat(3, 1fr); gap: 32px; box-sizing: border-box;
      height: 148px; margin-top: 39px; padding: 33px 32px 0; border-radius: 16px; background: #f8f9fb; text-align: center;
    }
    .value { font-size: 47px; line-height: 56px; font-weight: 700; letter-spacing: 0.2px; }
    .label { font-size: 23.300px; line-height: 28px; color: #666; letter-spacing: 0.38px; }
    .section { display: flex; align-items: center; gap: 9px; margin: 50px 0 33px; font-size: 35px; line-height: 44px; font-weight: 700; color: #555; letter-spacing: -0.1px; }
    .section emoji-icon { width: 36px; height: 36px; }
    .list { display: flex; box-sizing: border-box; height: 800px; border: 2px solid #ddd; border-radius: 16px; overflow: hidden; }
    .items { flex: 1; display: flex; flex-direction: column; overflow: hidden; min-width: 0; }
    .track {
      box-sizing: border-box; width: 30px; padding: 6px 0 0 6px;
      background: #fafafa; border-left: 2px solid #e8e8e8; border-right: 1px solid #ededed;
    }
    .thumb { width: 16px; height: 189px; border-radius: 8px; background: #c1c1c1; }
    .actions { display: flex; justify-content: flex-end; gap: 24px; margin-top: 48px; }
    .button {
      display: flex; align-items: center; gap: 8px; height: 69px; padding: 0 32px; border: 0; border-radius: 12px;
      font: 28px "Liberation Sans", Arial, sans-serif; color: #fff; background: #6c757d;
    }
    .primary { background: #28a745; }
    .primary emoji-icon { width: 28px; height: 28px; margin-top: -2px; }
  `;
  render() {
    return html`
      <h2 class="title"><emoji-icon name="target"></emoji-icon>Pole Prioritization Analysis</h2>
      <p class="subtitle">Analyzing poles in the vicinity of (40.0761, -83.1467)</p>
      <svg class="close-x" viewBox="0 0 20 20" stroke="#666" stroke-width="3.8"><path d="M1.500 1.500L18.500 18.500M18.500 1.500L1.500 18.500"/></svg>
      <div class="stats">
        ${STATS.map((s) => html`<div><div class="value">${s.value}</div><div class="label">${s.label}</div></div>`)}
      </div>
      <h3 class="section"><emoji-icon name="target"></emoji-icon>Prioritized Recommendations</h3>
      <div class="list">
        <div class="items">${POLES.map((p) => html`<pole-item .pole=${p}></pole-item>`)}</div>
        <div class="track"><div class="thumb"></div></div>
      </div>
      <div class="actions">
        <button class="button primary"><emoji-icon name="refresh"></emoji-icon>Re-analyze</button>
        <button class="button">Close</button>
      </div>
    `;
  }
}

@customElement("app-root")
class AppRoot extends LitElement {
  static styles = css`
    :host { display: block; position: relative; width: 3438px; height: 1778px; overflow: hidden; }
    .legend { position: absolute; top: 192px; right: 36px; }
    .credits {
      position: absolute; right: 0; top: 1762px; width: 550px; box-sizing: border-box; padding: 7px 0 0 19px;
      height: 40px; background: rgba(255, 255, 255, 0.5); color: #404040; white-space: nowrap;
      font: 24px/28px "Liberation Sans", Arial, sans-serif;
    }
    .improve { font-weight: 700; margin-left: 4px; }
    .overlay {
      position: absolute; inset: 0; display: flex; justify-content: center; align-items: flex-start;
      padding: 177px 10px 0 0; background: rgba(0, 0, 0, 0.5);
    }
  `;
  render() {
    return html`
      <app-header></app-header>
      <pole-map></pole-map>
      <risk-legend class="legend"></risk-legend>
      <div class="credits">© Mapbox © OpenStreetMap <span class="improve">Improve this map</span></div>
      <div class="overlay"><analysis-dialog></analysis-dialog></div>
    `;
  }
}
